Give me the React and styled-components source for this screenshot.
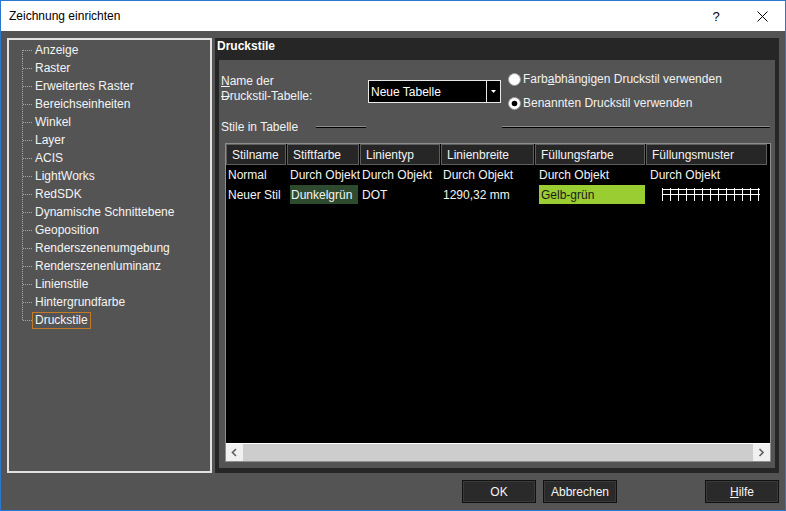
import React from "react";
import styled, { createGlobalStyle } from "styled-components";

const Global = createGlobalStyle`
  html, body { margin: 0; padding: 0; background: #545454; }
  body { font-family: "Liberation Sans", Arial, sans-serif; font-size: 12px; }
  * { box-sizing: border-box; }
`;

const Window = styled.div`
  width: 786px;
  height: 511px;
  border: 1px solid #2a78cf;
  display: flex;
  flex-direction: column;
  background: #545454;
  color: #f2f2f2;
  overflow: hidden;
`;

const TitleBar = styled.div`
  height: 30px;
  background: #ffffff;
  color: #000;
  display: flex;
  align-items: center;
  padding-left: 8px;
  font-size: 12px;
`;

const TitleText = styled.div`
  flex: 1;
`;

const CaptionButton = styled.div`
  width: 46px;
  height: 30px;
  display: flex;
  align-items: center;
  justify-content: center;
  font-size: 13px;
  color: #000;
`;

const Body = styled.div`
  flex: 1;
  display: flex;
  flex-direction: column;
  padding: 7px 6px 7px 6px;
  min-height: 0;
`;

const Main = styled.div`
  height: 435px;
  display: flex;
  gap: 3px;
`;

const TreePanel = styled.div`
  width: 205px;
  border: 2px solid #e2e2e2;
  padding: 1px 0 0 13px;
  display: flex;
  flex-direction: column;
`;

const TreeItem = styled.div`
  height: 18px;
  display: flex;
  align-items: center;
  white-space: nowrap;
`;

const TreeLabel = styled.span`
  height: 17px;
  line-height: 15px;
  padding: 0 2px;
  margin-left: -2px;
  border: 1px solid ${(p) => (p.$focused ? "#c27a26" : "transparent")};
  color: #f4f4f4;
`;

const RightPanel = styled.div`
  flex: 1;
  background: #262626;
  display: flex;
  flex-direction: column;
  padding: 0 4px 5px 4px;
`;

const PanelHeader = styled.div`
  height: 22px;
  display: flex;
  align-items: flex-start;
  padding-top: 1px;
  margin-left: -2px;
  font-weight: bold;
  color: #ffffff;
  font-size: 12px;
`;

const Content = styled.div`
  flex: 1;
  background: #545454;
  display: flex;
  flex-direction: column;
  padding: 7px 4px 6px 2px;
  min-height: 0;
`;

const FormRow = styled.div`
  display: flex;
  align-items: flex-start;
`;

const NameLabel = styled.div`
  width: 147px;
  margin-top: 7px;
  line-height: 15px;
`;

const Under = styled.span`
  text-decoration: underline;
`;

const Strike = styled.span`
  text-decoration: line-through;
`;

const Combo = styled.div`
  width: 133px;
  height: 23px;
  margin-top: 13px;
  background: #000;
  border: 1px solid #e8e8e8;
  display: flex;
  align-items: stretch;
`;

const ComboText = styled.div`
  flex: 1;
  display: flex;
  align-items: center;
  padding-left: 2px;
  color: #fff;
`;

const ComboButton = styled.div`
  width: 14px;
  border-left: 1px solid #e8e8e8;
  display: flex;
  align-items: center;
  justify-content: center;
`;

const RadioGroup = styled.div`
  margin-left: 7px;
  display: flex;
  flex-direction: column;
`;

const RadioRow = styled.div`
  height: 24px;
  display: flex;
  align-items: center;
  gap: 2px;
  white-space: nowrap;
`;

const SectionRow = styled.div`
  margin-top: 4px;
  height: 16px;
  display: flex;
  align-items: center;
`;

const SectionLabel = styled.div`
  width: 95px;
`;

const Rule = styled.div`
  height: 2px;
  border-top: 1px solid #8c8c8c;
  background: #000;
  width: ${(p) => (p.$w ? p.$w + "px" : "auto")};
  flex: ${(p) => (p.$w ? "none" : 1)};
  margin-left: ${(p) => p.$ml || 0}px;
  margin-right: ${(p) => p.$mr || 0}px;
`;

const Table = styled.div`
  margin: 8px 0 0 4px;
  flex: 1;
  background: #000;
  border: 1px solid #8e8e8e;
  display: flex;
  flex-direction: column;
  min-height: 0;
`;

const cols = "61px 73px 81px 94px 111px 122px";

const HeaderRow = styled.div`
  display: grid;
  grid-template-columns: ${cols};
  height: 21px;
`;

const HeaderCell = styled.div`
  background: #262626;
  border: 1px solid #5e5e5e;
  margin-right: 1px;
  display: flex;
  align-items: center;
  padding-left: 5px;
  color: #f4f4f4;
  white-space: nowrap;
  overflow: hidden;
`;

const Row = styled.div`
  display: grid;
  grid-template-columns: ${cols};
  height: 20px;
`;

const Cell = styled.div`
  display: flex;
  align-items: center;
  padding-left: ${(p) => p.$pl ?? 2}px;
  padding-right: ${(p) => p.$pr ?? 0}px;
  white-space: nowrap;
  overflow: hidden;
  color: #f4f4f4;
`;

const Swatch = styled.div`
  height: 19px;
  flex: 1;
  display: flex;
  align-items: center;
  padding-left: ${(p) => p.$pl ?? 1}px;
  background: ${(p) => p.$bg};
  color: ${(p) => p.$fg};
  margin-top: -1px;
`;

const TableBody = styled.div`
  flex: 1;
`;

const Scrollbar = styled.div`
  height: 18px;
  background: #f0f0f0;
  border-top: 1px solid #ffffff;
  display: flex;
  align-items: stretch;
`;

const ScrollArrow = styled.div`
  width: 17px;
  display: flex;
  align-items: center;
  justify-content: center;
`;

const ScrollThumb = styled.div`
  flex: 1;
  background: #cdcdcd;
`;

const Footer = styled.div`
  margin-top: 7px;
  height: 23px;
  display: flex;
  justify-content: flex-end;
`;

const Button = styled.div`
  width: 74px;
  height: 23px;
  margin-left: ${(p) => p.$ml || 0}px;
  background: #2a2a2a;
  border: 1px solid #111;
  box-shadow: inset 0 0 0 1px #3a3a3a;
  display: flex;
  align-items: center;
  justify-content: center;
  color: #f4f4f4;
  font-size: 12px;
`;

const treeItems = [
  "Anzeige",
  "Raster",
  "Erweitertes Raster",
  "Bereichseinheiten",
  "Winkel",
  "Layer",
  "ACIS",
  "LightWorks",
  "RedSDK",
  "Dynamische Schnittebene",
  "Geoposition",
  "Renderszenenumgebung",
  "Renderszenenluminanz",
  "Linienstile",
  "Hintergrundfarbe",
  "Druckstile",
];

function Connector({ first, last }) {
  const y1 = first ? 9 : 0;
  const y2 = last ? 9 : 18;
  return (
    <svg width="12" height="18" viewBox="0 0 12 18" style={{ flex: "none" }}>
      <line x1="0.5" y1={y1} x2="0.5" y2={y2} stroke="#a8a8a8" strokeDasharray="1 1" />
      <line x1="1" y1="9.5" x2="11" y2="9.5" stroke="#a8a8a8" strokeDasharray="1 1" />
    </svg>
  );
}

function Radio({ checked }) {
  return (
    <svg width="13" height="13" viewBox="0 0 13 13">
      <circle cx="6.5" cy="6.5" r="6" fill="#ffffff" stroke="#9a9a9a" />
      {checked && <circle cx="6.5" cy="6.5" r="2.8" fill="#000" />}
    </svg>
  );
}

function Chevron({ dir }) {
  const d = dir === "left" ? "M5 1 L1.5 4.5 L5 8" : "M1.5 1 L5 4.5 L1.5 8";
  return (
    <svg width="7" height="9" viewBox="0 0 7 9">
      <path d={d} fill="none" stroke="#606060" strokeWidth="1.6" />
    </svg>
  );
}

function Hatch() {
  const xs = [];
  for (let i = 0; i < 13; i++) xs.push(0.5 + i * 8);
  return (
    <svg width="98" height="14" viewBox="0 0 98 14">
      <line x1="0" y1="1.5" x2="98" y2="1.5" stroke="#fff" />
      <line x1="0" y1="6.5" x2="98" y2="6.5" stroke="#fff" />
      {xs.map((x) => (
        <line key={x} x1={x} y1="0" x2={x} y2="13" stroke="#fff" />
      ))}
    </svg>
  );
}

export default function App() {
  return (
    <>
      <Global />
      <Window>
        <TitleBar>
          <TitleText>Zeichnung einrichten</TitleText>
          <CaptionButton>?</CaptionButton>
          <CaptionButton>
            <svg width="11" height="11" viewBox="0 0 11 11">
              <path d="M0.5 0.5 L10.5 10.5 M10.5 0.5 L0.5 10.5" stroke="#000" strokeWidth="1" />
            </svg>
          </CaptionButton>
        </TitleBar>
        <Body>
          <Main>
            <TreePanel>
              {treeItems.map((t, i) => (
                <TreeItem key={t}>
                  <Connector first={i === 0} last={i === treeItems.length - 1} />
                  <TreeLabel $focused={t === "Druckstile"}>{t}</TreeLabel>
                </TreeItem>
              ))}
            </TreePanel>
            <RightPanel>
              <PanelHeader>Druckstile</PanelHeader>
              <Content>
                <FormRow>
                  <NameLabel>
                    <Under>N</Under>ame der
                    <br />
                    <Strike>D</Strike>ruckstil-Tabelle:
                  </NameLabel>
                  <Combo>
                    <ComboText>Neue Tabelle</ComboText>
                    <ComboButton>
                      <svg width="5" height="3" viewBox="0 0 5 3">
                        <path d="M0 0 H5 L2.5 3 Z" fill="#fff" />
                      </svg>
                    </ComboButton>
                  </Combo>
                  <RadioGroup>
                    <RadioRow>
                      <Radio />
                      <span>
                        Farb<Under>a</Under>bhängigen Druckstil verwenden
                      </span>
                    </RadioRow>
                    <RadioRow>
                      <Radio checked />
                      <span>Benannten Druckstil verwenden</span>
                    </RadioRow>
                  </RadioGroup>
                </FormRow>
                <SectionRow>
                  <SectionLabel>Stile in Tabelle</SectionLabel>
                  <Rule $w={50} />
                  <Rule $ml={136} $mr={1} />
                </SectionRow>
                <Table>
                  <HeaderRow>
                    <HeaderCell>Stilname</HeaderCell>
                    <HeaderCell>Stiftfarbe</HeaderCell>
                    <HeaderCell>Linientyp</HeaderCell>
                    <HeaderCell>Linienbreite</HeaderCell>
                    <HeaderCell>Füllungsfarbe</HeaderCell>
                    <HeaderCell>Füllungsmuster</HeaderCell>
                  </HeaderRow>
                  <TableBody>
                    <Row>
                      <Cell>Normal</Cell>
                      <Cell $pl={3}>Durch Objekt</Cell>
                      <Cell>Durch Objekt</Cell>
                      <Cell>Durch Objekt</Cell>
                      <Cell $pl={4}>Durch Objekt</Cell>
                      <Cell $pl={4}>Durch Objekt</Cell>
                    </Row>
                    <Row>
                      <Cell>Neuer Stil</Cell>
                      <Cell $pl={3} $pr={2}>
                        <Swatch $bg="#2e4a2f" $fg="#f4f4f4">Dunkelgrün</Swatch>
                      </Cell>
                      <Cell>DOT</Cell>
                      <Cell>1290,32 mm</Cell>
                      <Cell $pl={4} $pr={1}>
                        <Swatch $bg="#9acd32" $fg="#1a1a1a" $pl={2}>Gelb-grün</Swatch>
                      </Cell>
                      <Cell $pl={16}>
                        <Hatch />
                      </Cell>
                    </Row>
                  </TableBody>
                  <Scrollbar>
                    <ScrollArrow>
                      <Chevron dir="left" />
                    </ScrollArrow>
                    <ScrollThumb />
                    <ScrollArrow>
                      <Chevron dir="right" />
                    </ScrollArrow>
                  </Scrollbar>
                </Table>
              </Content>
            </RightPanel>
          </Main>
          <Footer>
            <Button>OK</Button>
            <Button $ml={7}>Abbrechen</Button>
            <Button $ml={88}>
              <span>
                <Under>H</Under>ilfe
              </span>
            </Button>
          </Footer>
        </Body>
      </Window>
    </>
  );
}
